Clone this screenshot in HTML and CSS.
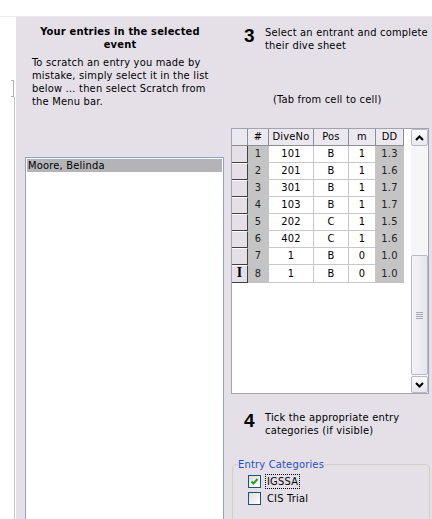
FILE: index.html
```html
<!DOCTYPE html>
<html lang="en">
<head>
<meta charset="utf-8">
<title>Dive sheet entry</title>
<link rel="stylesheet" href="styles.css">
</head>
<body>
<div class="screen">
  <div class="topbar"></div>
  <div class="main">
    <div class="edge">
      <div class="edge-stub"></div>
      <div class="edge-line"></div>
    </div>

    <section class="entries">
      <h2 class="entries-title">Your entries in the selected event</h2>
      <p class="entries-help">To scratch an entry you made by mistake, simply select it in the list below &hellip; then select Scratch from the Menu bar.</p>
      <div class="listbox">
        <div class="list-item selected">Moore, Belinda</div>
      </div>
    </section>

    <section class="sheet">
      <div class="step">
        <span class="step-num">3</span>
        <span class="step-text">Select an entrant and complete their dive sheet</span>
      </div>
      <p class="hint">(Tab from cell to cell)</p>

      <div class="grid">
        <div class="grid-cells">
          <table class="dives">
            <colgroup>
              <col class="c-hdr"><col class="c-num"><col class="c-dive"><col class="c-pos"><col class="c-m"><col class="c-dd">
            </colgroup>
            <thead>
              <tr><th class="rowhdr"></th><th>#</th><th>DiveNo</th><th>Pos</th><th>m</th><th>DD</th></tr>
            </thead>
            <tbody>
              <tr><td class="rowhdr"></td><td class="ro">1</td><td>101</td><td>B</td><td>1</td><td class="ro">1.3</td></tr>
              <tr><td class="rowhdr"></td><td class="ro">2</td><td>201</td><td>B</td><td>1</td><td class="ro">1.6</td></tr>
              <tr><td class="rowhdr"></td><td class="ro">3</td><td>301</td><td>B</td><td>1</td><td class="ro">1.7</td></tr>
              <tr><td class="rowhdr"></td><td class="ro">4</td><td>103</td><td>B</td><td>1</td><td class="ro">1.7</td></tr>
              <tr><td class="rowhdr"></td><td class="ro">5</td><td>202</td><td>C</td><td>1</td><td class="ro">1.5</td></tr>
              <tr><td class="rowhdr"></td><td class="ro">6</td><td>402</td><td>C</td><td>1</td><td class="ro">1.6</td></tr>
              <tr><td class="rowhdr"></td><td class="ro">7</td><td>1</td><td>B</td><td>0</td><td class="ro">1.0</td></tr>
              <tr><td class="rowhdr current"><span class="ibeam">I</span></td><td class="ro">8</td><td>1</td><td>B</td><td>0</td><td class="ro">1.0</td></tr>
            </tbody>
          </table>
        </div>
        <div class="vscroll">
          <div class="sb-btn">
            <svg width="9" height="6" viewBox="0 0 9 6"><polyline points="1,5 4.5,1.5 8,5" fill="none" stroke="#000" stroke-width="2"/></svg>
          </div>
          <div class="sb-track">
            <div class="sb-thumb">
              <svg width="7" height="7" viewBox="0 0 7 7"><path d="M0 0.5H7M0 2.5H7M0 4.5H7M0 6.5H7" stroke="#a8a8b8" stroke-width="1"/></svg>
            </div>
          </div>
          <div class="sb-btn">
            <svg width="9" height="6" viewBox="0 0 9 6"><polyline points="1,1 4.5,4.5 8,1" fill="none" stroke="#000" stroke-width="2"/></svg>
          </div>
        </div>
      </div>

      <div class="step step-4">
        <span class="step-num">4</span>
        <span class="step-text">Tick the appropriate entry categories (if visible)</span>
      </div>

      <fieldset class="group">
        <legend>Entry Categories</legend>
        <label class="check">
          <span class="box checked">
            <svg width="9" height="9" viewBox="0 0 9 9"><polyline points="1.5,4.5 3.5,6.5 7.5,2" fill="none" stroke="#21a121" stroke-width="2"/></svg>
          </span>
          <span class="check-label focus">IGSSA</span>
        </label>
        <label class="check">
          <span class="box"></span>
          <span class="check-label">CIS Trial</span>
        </label>
      </fieldset>
    </section>
  </div>
</div>
</body>
</html>
```

FILE: styles.css
```css
* { box-sizing: border-box; }

html, body {
  margin: 0;
  padding: 0;
  background: #fff;
}

body {
  width: 432px;
  height: 519px;
  overflow: hidden;
  font-family: "DejaVu Sans Condensed", "DejaVu Sans", sans-serif;
  font-stretch: semi-condensed;
  font-size: 11px;
  letter-spacing: 0.2px;
  line-height: 13px;
  color: #000;
}

.screen {
  display: flex;
  flex-direction: column;
  height: 519px;
}

.topbar {
  flex: none;
  height: 17px;
  background: #fff;
  border-bottom: 1px solid #ecebee;
}

.main {
  flex: 1;
  min-height: 0;
  overflow: hidden;
  display: flex;
  background: #e5e0e8;
}

/* neighbouring window edge on the far left */
.edge {
  flex: none;
  width: 16px;
  background: #fff;
  display: flex;
  flex-direction: column;
  padding-top: 63px;
}

.edge-stub {
  flex: none;
  width: 3px;
  height: 17px;
  margin-left: 11px;
  border: 1px solid #b4b4bc;
  border-left: none;
}

.edge-line {
  flex: 1;
  width: 16px;
  border-right: 2px solid #fff;
}
.edge-line::after {
  content: "";
  display: block;
  margin-left: 14px;
  width: 1px;
  height: 100%;
  background: #c4c4c8;
}

/* left column: entries list */
.entries {
  flex: none;
  width: 214px;
  display: flex;
  flex-direction: column;
}

.entries-title {
  margin: 0;
  padding: 8px 20px 0 14px;
  font-size: 11px;
  line-height: 13px;
  font-weight: bold;
  text-align: center;
}

.entries-help {
  margin: 5px 0 0 16px;
  width: 182px;
}

.listbox {
  margin: 49px 0 0 9px;
  width: 199px;
  flex: 1;
  background: #fff;
  border: 1px solid #8ea6c6;
  border-bottom: none;
  padding: 1px;
}

.list-item {
  height: 13px;
  padding-left: 1px;
  line-height: 13px;
}
.list-item.selected {
  background: #b4b4b8;
}

/* right column: dive sheet */
.sheet {
  flex: 1;
  min-width: 0;
  display: flex;
  flex-direction: column;
  padding-left: 1px;
}

.step {
  display: flex;
  align-items: flex-start;
  padding: 9px 0 0 13px;
}

.step-num {
  width: 21px;
  flex: none;
  font-family: "Liberation Sans", Arial, sans-serif;
  font-stretch: normal;
  letter-spacing: 0;
  font-weight: bold;
  font-size: 19px;
  line-height: 16px;
  padding-top: 2px;
}

.step-text {
  width: 167px;
}

.hint {
  margin: 41px 0 0 42px;
}

.grid {
  flex: none;
  margin-top: 22px;
  width: 198px;
  height: 266px;
  border: 1px solid #a4a4b0;
  background: #fff;
  display: flex;
}

.grid-cells {
  flex: 1;
}

.dives {
  border-collapse: separate;
  border-spacing: 0;
  table-layout: fixed;
  width: 172px;
}

.c-hdr { width: 16px; }
.c-num { width: 21px; }
.c-dive { width: 45px; }
.c-pos { width: 35px; }
.c-m { width: 27px; }
.c-dd { width: 28px; }

.dives th,
.dives td {
  height: 17px;
  padding: 0;
  text-align: center;
  font-weight: normal;
  line-height: 16px;
  border-right: 1px solid #c8c8c8;
  border-bottom: 1px solid #c8c8c8;
}

.dives th {
  background: #ece8ef;
  border-right-color: #8c8c94;
  border-bottom-color: #8c8c94;
}

.dives td.ro {
  background: #c4c4c4;
  color: #222;
  border-right-color: #c4c4c4;
  border-bottom-color: #c4c4c4;
}

.dives td.rowhdr {
  background: #e5e0e8;
  border-top: 1px solid #fff;
  border-right: 1px solid #404040;
  border-bottom: 1px solid #404040;
  height: 17px;
}
.dives tbody tr:first-child td.rowhdr {
  border-top: none;
}

.ibeam {
  font-family: "Liberation Serif", "Times New Roman", serif;
  font-stretch: normal;
  font-weight: bold;
  font-size: 14px;
  line-height: 14px;
}

/* vertical scrollbar */
.vscroll {
  flex: none;
  width: 18px;
  display: flex;
  flex-direction: column;
  background: #f6f5f8;
  border-left: 1px solid #fff;
}

.sb-btn {
  height: 17px;
  flex: none;
  display: flex;
  align-items: center;
  justify-content: center;
  border: 1px solid #b8bac8;
  border-radius: 2px;
  background: linear-gradient(#fbfbfd, #e9e7ef);
}

.sb-track {
  flex: 1;
  display: flex;
  flex-direction: column;
  justify-content: flex-end;
  padding-bottom: 1px;
}

.sb-thumb {
  height: 120px;
  display: flex;
  align-items: center;
  justify-content: center;
  border: 1px solid #b8bac8;
  border-radius: 2px;
  background: linear-gradient(90deg, #f4f3f7, #e7e5ed);
}

.step-4 {
  padding-top: 17px;
}

/* entry category group box */
.group {
  flex: none;
  margin: 21px 2px 0 1px;
  padding: 2px 0 20px 8px;
  border: 1px solid #d0d0c6;
  border-radius: 4px;
  min-width: 0;
}

.group legend {
  padding: 0;
  margin-left: -3px;
  color: #1f4fc4;
}

.check {
  display: flex;
  align-items: center;
  height: 17px;
  margin-left: 7px;
}

.box {
  width: 13px;
  height: 13px;
  border: 1px solid #1c5180;
  background: linear-gradient(135deg, #dcdcd7, #fff);
  display: flex;
  align-items: center;
  justify-content: center;
  margin-right: 5px;
}

.check-label {
  padding: 0 1px;
  line-height: 13px;
}

.check-label.focus {
  outline: 1px dotted #000;
  outline-offset: 0;
}
```
